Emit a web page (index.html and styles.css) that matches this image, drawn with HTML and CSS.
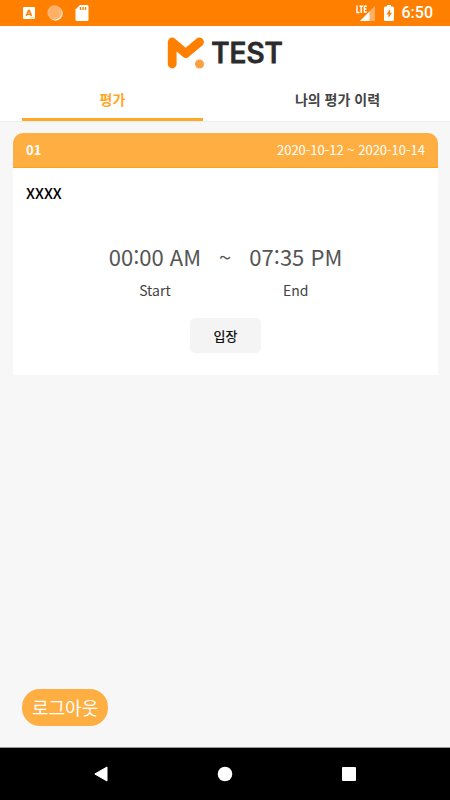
FILE: index.html
```html
<!DOCTYPE html>
<html lang="ko">
<head>
<meta charset="utf-8">
<meta name="viewport" content="width=device-width, initial-scale=1">
<title>M. TEST</title>
<link rel="stylesheet" href="styles.css">
</head>
<body>
<div class="status">
  <div class="status-group status-left">
    <svg width="12" height="14" viewBox="0 0 12 14" aria-hidden="true"><rect y="1" width="12" height="12" rx="1" fill="#fff"/><path d="M3.300 10 5.500 4.500h.8L8.500 10M4.200 8.200h3.500" fill="none" stroke="#ff8000" stroke-width="1.600"/><path d="M7 11.800h4" stroke="#ffc999" stroke-width="1"/></svg>
    <svg width="16" height="16" viewBox="0 0 16 16" aria-hidden="true"><circle cx="8.500" cy="8.500" r="7.200" fill="#fff0d8"/><circle cx="7.500" cy="7.500" r="7.200" fill="#ffb066"/><circle cx="7.500" cy="7.500" r="5.500" fill="none" stroke="#ffc38c" stroke-dasharray="1 1"/></svg>
    <svg width="14" height="16" viewBox="0 0 14 16" aria-hidden="true"><path d="M5 0h7q1.500 0 1.500 1.500v13q0 1.500-1.500 1.500H2q-1.500 0-1.500-1.500V4.500z" fill="#fff"/><path d="M5.500 2v3M8 2v3M10.500 2v3" stroke="#ff8000" stroke-width="1.400"/></svg>
  </div>
  <div class="status-group status-right">
    <svg width="20" height="17" viewBox="0 0 20 17" aria-hidden="true"><path d="M19 1v15H4z" fill="#ffb066"/><path d="M13.500 6.500V16H4z" fill="#fff"/><path d="M1 .5v7h2.500M3.500 1.200h3.500M5.200 1v7M10.800 1.200H8.400v5.800h2.400M8.400 4h2" fill="none" stroke="#fff" stroke-width="1.400"/></svg>
    <svg width="10" height="16" viewBox="0 0 10 16" aria-hidden="true"><path d="M3 0h4v1.500h1.500q1.500 0 1.500 1.500v11.500q0 1.500-1.500 1.500h-7Q0 16 0 14.500V3q0-1.500 1.500-1.500H3z" fill="#fff"/><path d="M6 4 2.500 9.500h2V13L8 7.700H6z" fill="#ff8000"/></svg>
    <span class="clock">6:50</span>
  </div>
</div>
<header class="header">
  <h1 class="logo">
    <svg width="38" height="34" viewBox="0 0 38 34" role="img" aria-label="M."><path d="M5.200 28V6l13.500 11.500L32.500 6" fill="none" stroke="#ff8000" stroke-width="8.800" stroke-linecap="round" stroke-linejoin="round"/><circle cx="32.500" cy="28" r="4.500" fill="#ff9f43"/></svg>
    <span class="logo-text">TEST</span>
  </h1>
  <nav class="tabs">
    <a class="tab tab-active" href="#tests">평가</a>
    <a class="tab" href="#history">나의 평가 이력</a>
  </nav>
</header>
<main class="content">
  <article class="card">
    <div class="card-head"><strong>01</strong><span>2020-10-12 ~ 2020-10-14</span></div>
    <div class="card-body">
      <h2 class="title">XXXX</h2>
      <div class="times">
        <div class="time"><span class="value">00:00 AM</span><span class="label">Start</span></div>
        <span class="value">~</span>
        <div class="time"><span class="value">07:35 PM</span><span class="label">End</span></div>
      </div>
      <button class="enter" type="button">입장</button>
    </div>
  </article>
  <button class="logout" type="button">로그아웃</button>
</main>
<footer class="navbar">
  <button class="nav-button" type="button" aria-label="Back"><svg width="14" height="16" viewBox="0 0 14 16"><path d="M.8 8 13 1v14z" fill="#fff" stroke="#fff" stroke-linejoin="round"/></svg></button>
  <button class="nav-button" type="button" aria-label="Home"><svg width="16" height="16" viewBox="0 0 16 16"><circle cx="8" cy="8" r="7.300" fill="#fff"/></svg></button>
  <button class="nav-button" type="button" aria-label="Recent apps"><svg width="14" height="14" viewBox="0 0 14 14"><rect width="14" height="14" rx="1" fill="#fff"/></svg></button>
</footer>
</body>
</html>
```
FILE: styles.css
```css
* {
  box-sizing: border-box;
}

body {
  display: flex;
  flex-direction: column;
  min-height: 100vh;
  margin: 0;
  background: #f7f7f7;
  color: #444;
  font-family: "Noto Sans CJK KR", "Noto Sans", sans-serif;
}

button {
  border: 0;
  font-family: inherit;
}

svg {
  display: block;
}

.status {
  display: flex;
  align-items: center;
  justify-content: space-between;
  height: 26px;
  padding: 0 17px 0 23px;
  background: #ff8000;
}

.status-group {
  display: flex;
  align-items: center;
}

.status-left {
  gap: 12px;
}

.status-right {
  gap: 8px;
}

.clock {
  color: #fff;
  font: 500 16px/28px Roboto, sans-serif;
}

.header {
  background: #fff;
  border-bottom: 1px solid #eee;
}

.logo {
  display: flex;
  align-items: center;
  justify-content: center;
  gap: 6px;
  height: 54px;
  margin: 0;
}

.logo-text {
  color: #2b2b2b;
  font: 500 28px/32px Inter, sans-serif;
  -webkit-text-stroke: 1px #2b2b2b;
}

.tabs {
  display: grid;
  grid-template-columns: 1fr 1fr;
}

.tab {
  margin: 0 22px;
  padding: 4px 0;
  border-bottom: 3px solid transparent;
  color: #444;
  font-size: 14px;
  font-weight: 700;
  line-height: 30px;
  text-align: center;
  text-decoration: none;
}

.tab-active {
  border-color: #ffa726;
  color: #ffa726;
}

.content {
  display: flex;
  flex: 1;
  flex-direction: column;
  align-items: flex-start;
  justify-content: space-between;
  padding: 11px 12px 21px 13px;
}

.card {
  align-self: stretch;
  overflow: hidden;
  border-radius: 10px 10px 2px 2px;
  background: #fff;
}

.card-head {
  display: flex;
  justify-content: space-between;
  padding: 0 13px;
  border-bottom: 1px solid #ffa410;
  background: #ffae42;
  color: #fff;
  font-size: 13px;
  line-height: 34px;
}

.card-body {
  display: flex;
  flex-direction: column;
  align-items: center;
  padding: 14px 13px 22px;
}

.title {
  align-self: flex-start;
  margin: 0 0 36px;
  color: #000;
  font-size: 15px;
  font-weight: 500;
  line-height: 22px;
}

.times {
  display: flex;
  gap: 18px;
  margin-bottom: 18px;
}

.time {
  display: flex;
  flex-direction: column;
  align-items: center;
}

.value {
  color: #555;
  font-size: 22px;
  line-height: 32px;
}

.label {
  padding-top: 8px;
  font-size: 14px;
  line-height: 20px;
}

.enter {
  padding: 0 24px;
  border-radius: 5px;
  background: #f4f4f4;
  color: #111;
  font-size: 13px;
  font-weight: 500;
  line-height: 35px;
}

.logout {
  margin-left: 9px;
  padding: 0 10px;
  border-radius: 18px;
  background: #ffae42;
  color: #fff;
  font-size: 18px;
  font-weight: 400;
  line-height: 37px;
}

.navbar {
  display: flex;
  align-items: center;
  justify-content: center;
  gap: 109px;
  height: 53px;
  border-top: 1px solid #999;
  background: #000;
}

.nav-button {
  display: flex;
  padding: 0;
  background: none;
}
```
